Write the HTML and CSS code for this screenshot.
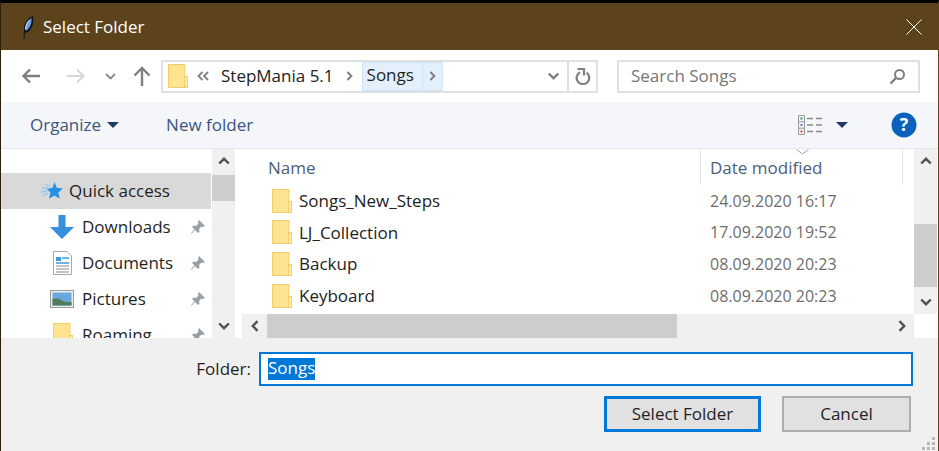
FILE: index.html
```html
<!DOCTYPE html>
<html lang="en">
<head>
  <meta charset="UTF-8">
  <title>Select Folder</title>
  <link rel="stylesheet" href="styles.css">
</head>
<body>
<svg class="defs" width="0" height="0">
  <symbol id="folder" viewBox="0 0 20 24">
    <rect x=".5" y=".5" width="16.500" height="23" fill="#fee491" stroke="#f2cf6b"/>
    <rect x="16.500" y="12.500" width="3" height="11" fill="#fde9a8" stroke="#f2cf6b"/>
  </symbol>
  <symbol id="pin" viewBox="0 0 16 16">
    <path d="M9 1l6 6-2 1-1.500-.5L9 10l.5 2.500L8 14 5 11l-3.500 4L1 14.500 4.500 10 2 8l1.500-1.500L6 7l2.500-2.500L8 3z" fill="#97a0a8"/>
  </symbol>
  <symbol id="chev-up" viewBox="0 0 12 8">
    <path d="M1.200 6.500L6 1.800l4.800 4.700" fill="none" stroke="currentColor" stroke-width="2.400"/>
  </symbol>
  <symbol id="chev-down" viewBox="0 0 12 8">
    <path d="M1.200 1.500L6 6.200l4.800-4.700" fill="none" stroke="currentColor" stroke-width="2.400"/>
  </symbol>
  <symbol id="chev-left" viewBox="0 0 8 12">
    <path d="M6.500 1.200L1.800 6l4.700 4.800" fill="none" stroke="currentColor" stroke-width="2.400"/>
  </symbol>
  <symbol id="chev-right" viewBox="0 0 8 12">
    <path d="M1.500 1.200L6.200 6l-4.700 4.800" fill="none" stroke="currentColor" stroke-width="2.400"/>
  </symbol>
</svg>

<div class="dialog">
  <header class="titlebar">
    <svg class="feather" width="13" height="24" viewBox="0 0 13 24">
      <path d="M2.500 24L3 16C2 11 5 4 12 1c1 6 0 12-5 16l-3 1-.5 6z" fill="#10141c"/>
      <path d="M4 15C4 10 6 6 10.500 3 11 8 9 13 5.500 15.500z" fill="#6a9fe0"/>
      <path d="M4.500 14C5 10 6.500 7 8.500 5" stroke="#cfe2f8" fill="none"/>
    </svg>
    <span class="titlebar-text">Select Folder</span>
    <svg class="close" width="16" height="16" viewBox="0 0 16 16">
      <path d="M.5.5l15 15M15.500.5l-15 15" stroke="#fff" fill="none"/>
    </svg>
  </header>

  <div class="addressrow">
    <svg class="nav-icon back" width="20" height="16" viewBox="0 0 20 16">
      <path d="M19 8H2.500M9 1.500L2.500 8 9 14.500" fill="none" stroke="#7f7f7f" stroke-width="2.400"/>
    </svg>
    <svg class="nav-icon forward" width="20" height="16" viewBox="0 0 20 16">
      <path d="M1 8h16.500M11 1.500L17.500 8 11 14.500" fill="none" stroke="#d6d6d6" stroke-width="2"/>
    </svg>
    <svg class="nav-icon recent" width="11" height="7" viewBox="0 0 11 7">
      <path d="M1 1l4.500 4.500L10 1" fill="none" stroke="#8a8a8a" stroke-width="1.800"/>
    </svg>
    <svg class="nav-icon up" width="18" height="20" viewBox="0 0 18 20">
      <path d="M9 20V3M1.500 9.500L9 2l7.500 7.500" fill="none" stroke="#7f7f7f" stroke-width="2.400"/>
    </svg>
    <div class="addressbar">
      <svg class="address-folder" width="20" height="24"><use href="#folder"/></svg>
      <svg class="crumb-more" width="12" height="10" viewBox="0 0 12 10">
        <path d="M5.500 1L1.500 5l4 4M11 1L7 5l4 4" fill="none" stroke="#808080" stroke-width="1.800"/>
      </svg>
      <span class="crumb">StepMania 5.1</span>
      <svg class="crumb-arrow" width="7" height="10"><use href="#chev-right"/></svg>
      <span class="crumb-active">
        <span class="crumb-name">Songs</span>
        <span class="crumb-end"><svg class="crumb-end-arrow" width="7" height="10"><use href="#chev-right"/></svg></span>
      </span>
      <svg class="address-drop" width="13" height="8"><use href="#chev-down"/></svg>
      <span class="refresh">
        <svg width="16" height="18" viewBox="0 0 16 18">
          <path d="M5 5.200a6.300 6.300 0 1 0 6.500.4" fill="none" stroke="#808080" stroke-width="2.200"/>
          <path d="M2.500 2h6.500v6.500" fill="none" stroke="#808080" stroke-width="2.200"/>
        </svg>
      </span>
    </div>
    <div class="searchbox">
      <span class="search-text">Search Songs</span>
      <svg width="17" height="17" viewBox="0 0 17 17">
        <circle cx="10.500" cy="6.500" r="4.500" fill="none" stroke="#7f7f7f" stroke-width="2"/>
        <path d="M7 10l-5.500 5.500" stroke="#7f7f7f" stroke-width="2.400" fill="none"/>
      </svg>
    </div>
  </div>

  <div class="toolbar">
    <span class="tool organize">Organize</span>
    <span class="caret"></span>
    <span class="tool newfolder">New folder</span>
    <svg class="viewicon" width="25" height="20" viewBox="0 0 25 20">
      <path d="M.5.500h6v19h-6zM.5 6.800h6M.5 13.200h6" fill="#f3f3f3" stroke="#9a9a9a"/>
      <rect x="2.500" y="2.500" width="2" height="2" fill="#3b9a5a"/>
      <rect x="2.500" y="9" width="2" height="2" fill="#4a86d8"/>
      <rect x="2.500" y="15.500" width="2" height="2" fill="#d84a3a"/>
      <path d="M9 3.500h6M18 3.500h6M9 10h6M18 10h6M9 16.500h6M18 16.500h6" stroke="#8a8a8a" stroke-width="1.500" fill="none"/>
    </svg>
    <span class="caret caret-view"></span>
    <svg class="help" width="26" height="26" viewBox="0 0 26 26">
      <circle cx="13" cy="13" r="12.500" fill="#0b62bd"/>
      <text x="13" y="19" text-anchor="middle" class="help-mark">?</text>
    </svg>
  </div>

  <div class="panes">
    <nav class="navpane">
      <div class="navlist">
        <div class="navrow navrow-quick">
          <svg width="22" height="20" viewBox="0 0 22 20">
            <path d="M13.500 1l2.300 5.800 6.200.6-4.700 4.200 1.400 6.200-5.200-3.200-5.500 3.200 1.400-6.200-3.600-3.600 5.700-1.200z" fill="#2a8fe6"/>
            <path d="M4 3l5 3M1 7h6M0 11l6-1M2 15l5-3" stroke="#8cc8f2" stroke-width="1.300" fill="none"/>
          </svg>
          <span>Quick access</span>
        </div>
        <div class="navrow">
          <svg class="navicon" width="24" height="24" viewBox="0 0 24 24">
            <path d="M8.500 0h7v12H24L12 24 0 12h8.500z" fill="#3a8ee0"/>
          </svg>
          <span class="navlabel">Downloads</span>
          <svg class="pin" width="16" height="16"><use href="#pin"/></svg>
        </div>
        <div class="navrow">
          <svg class="navicon" width="24" height="24" viewBox="0 0 24 24">
            <path d="M3.500.5H17L21.500 5v18.500h-18z" fill="#fdfdfd" stroke="#a8a8a8"/>
            <path d="M6 6h5v4H6z" fill="#3c9ad8"/>
            <path d="M12 7h7M6 12h13" stroke="#3c9ad8" stroke-width="1.500"/>
            <path d="M6 15h13M6 18h13M6 21h13" stroke="#8a8a8a"/>
          </svg>
          <span class="navlabel">Documents</span>
          <svg class="pin" width="16" height="16"><use href="#pin"/></svg>
        </div>
        <div class="navrow">
          <svg class="navicon" width="24" height="18" viewBox="0 0 24 18">
            <rect x=".5" y=".5" width="23" height="17" fill="#eee" stroke="#9a9a9a"/>
            <rect x="2.500" y="2.500" width="19" height="13" fill="#6aa8dc"/>
            <path d="M2.500 9c5-1 8 0 10 2 3 1 6 1 9 1v3.500h-19z" fill="#4d7d5c"/>
          </svg>
          <span class="navlabel">Pictures</span>
          <svg class="pin" width="16" height="16"><use href="#pin"/></svg>
        </div>
        <div class="navrow">
          <svg class="navicon-folder" width="20" height="24"><use href="#folder"/></svg>
          <span class="navlabel">Roaming</span>
          <svg class="pin" width="16" height="16"><use href="#pin"/></svg>
        </div>
      </div>
      <div class="vscroll vscroll-nav">
        <span class="arrow"><svg width="12" height="8"><use href="#chev-up"/></svg></span>
        <div class="track"><div class="thumb thumb-nav"></div></div>
        <span class="arrow"><svg width="12" height="8"><use href="#chev-down"/></svg></span>
      </div>
    </nav>

    <section class="files">
      <div class="files-top">
        <div class="filelist">
          <div class="fileheader">
            <span class="col-name">Name</span>
            <span class="col-date">
              <svg class="sortmark" width="13" height="6" viewBox="0 0 13 6">
                <path d="M.5.500l6 4.500 6-4.500" fill="none" stroke="#a0a0a0"/>
              </svg>
              Date modified
            </span>
          </div>
          <div class="filerow">
            <svg width="20" height="24"><use href="#folder"/></svg>
            <span class="filename">Songs_New_Steps</span>
            <span class="filedate">24.09.2020 16:17</span>
          </div>
          <div class="filerow">
            <svg width="20" height="24"><use href="#folder"/></svg>
            <span class="filename">LJ_Collection</span>
            <span class="filedate">17.09.2020 19:52</span>
          </div>
          <div class="filerow">
            <svg width="20" height="24"><use href="#folder"/></svg>
            <span class="filename">Backup</span>
            <span class="filedate">08.09.2020 20:23</span>
          </div>
          <div class="filerow">
            <svg width="20" height="24"><use href="#folder"/></svg>
            <span class="filename">Keyboard</span>
            <span class="filedate">08.09.2020 20:23</span>
          </div>
        </div>
        <div class="vscroll vscroll-files">
          <span class="arrow"><svg width="12" height="8"><use href="#chev-up"/></svg></span>
          <div class="track"><div class="thumb thumb-files"></div></div>
          <span class="arrow"><svg width="12" height="8"><use href="#chev-down"/></svg></span>
        </div>
      </div>
      <div class="hscroll">
        <span class="harrow"><svg width="8" height="12"><use href="#chev-left"/></svg></span>
        <div class="htrack"><div class="hthumb"></div></div>
        <span class="harrow"><svg width="8" height="12"><use href="#chev-right"/></svg></span>
        <span class="corner"></span>
      </div>
    </section>
  </div>

  <footer class="footer">
    <div class="folderline">
      <span class="folderlabel">Folder:</span>
      <div class="folderinput"><span class="selected">Songs</span></div>
    </div>
    <div class="buttons">
      <span class="btn btn-default">Select Folder</span>
      <span class="btn btn-cancel">Cancel</span>
    </div>
    <svg class="grip" width="15" height="15" viewBox="0 0 15 15">
      <path d="M11 1h3v3h-3zM6 6h3v3H6zM11 6h3v3h-3zM1 11h3v3H1zM6 11h3v3H6zM11 11h3v3h-3z" fill="#b8b8b8"/>
    </svg>
  </footer>
</div>
</body>
</html>
```

FILE: styles.css
```css
* {
  box-sizing: border-box;
}
html, body {
  margin: 0;
  height: 100%;
  overflow: hidden;
}
body {
  font-family: "Open Sans", "Noto Sans", sans-serif;
  font-size: 17px;
  color: #1f1f1f;
  background: #000;
}
.defs {
  display: block;
  height: 0;
}
svg {
  display: block;
  flex: none;
  color: #505050;
}
.dialog {
  width: 939px;
  height: 451px;
  display: flex;
  flex-direction: column;
  border-top: 3px solid #000;
  border-left: 1px solid #2c2008;
  border-right: 1px solid #5c431b;
  background: #fff;
}

/* title bar */
.titlebar {
  height: 47px;
  flex: none;
  display: flex;
  align-items: center;
  padding: 0 16px 0 20px;
  background: #5c431b;
  color: #fff;
}
.feather {
  margin-right: 9px;
}
.titlebar-text {
  flex: 1;
}

/* back / forward row */
.addressrow {
  height: 52px;
  flex: none;
  display: flex;
  align-items: center;
  padding-left: 20px;
  background: #fff;
}
.forward {
  margin-left: 25px;
}
.recent {
  margin-left: 19px;
}
.up {
  margin-left: 17px;
}
.addressbar {
  width: 437px;
  height: 33px;
  margin-left: 10px;
  display: flex;
  align-items: center;
  padding-left: 5px;
  border: 2px solid #e0e0e0;
}
.crumb-more {
  margin-left: 9px;
  margin-right: 12px;
}
.crumb {
  padding-bottom: 2px;
  color: #222;
}
.crumb-arrow {
  margin-left: 12px;
  color: #808080;
}
.crumb-active {
  margin-left: 9px;
  height: 29px;
  display: flex;
  background: #e3f0fb;
  border: 1px solid #cfe6f9;
}
.crumb-name {
  width: 60px;
  padding-left: 4px;
  line-height: 24px;
  border-right: 1px solid #cfe6f9;
}
.crumb-end {
  width: 19px;
  display: flex;
  align-items: center;
  justify-content: center;
}
.crumb-end-arrow {
  color: #808080;
}
.address-drop {
  margin-left: auto;
  margin-right: 7px;
  color: #808080;
}
.refresh {
  width: 29px;
  height: 29px;
  display: flex;
  align-items: center;
  justify-content: center;
  border-left: 2px solid #e0e0e0;
}
.searchbox {
  width: 303px;
  height: 33px;
  margin-left: 19px;
  display: flex;
  align-items: center;
  justify-content: space-between;
  padding: 0 12px 0 12px;
  border: 2px solid #e0e0e0;
  color: #767676;
}
.search-text {
  padding-bottom: 2px;
}

/* organize toolbar */
.toolbar {
  height: 47px;
  flex: none;
  display: flex;
  align-items: center;
  padding-left: 29px;
  background: #f4f6f9;
  border-bottom: 1px solid #e6e8ea;
}
.tool {
  padding-bottom: 2px;
  color: #3b5680;
}
.caret {
  width: 0;
  height: 0;
  margin-left: 6px;
  border-left: 6px solid transparent;
  border-right: 6px solid transparent;
  border-top: 6px solid #1f3a63;
}
.newfolder {
  margin-left: 47px;
}
.viewicon {
  margin-left: auto;
}
.caret-view {
  margin-left: 13px;
}
.help {
  margin-left: 43px;
  margin-right: 21px;
}
.help-mark {
  font-family: "Open Sans", sans-serif;
  font-size: 18px;
  font-weight: 700;
  fill: #fff;
}

/* navigation and file panes */
.panes {
  height: 189px;
  flex: none;
  display: flex;
  overflow: hidden;
}
.navpane {
  width: 239px;
  flex: none;
  display: flex;
  padding-right: 5px;
}
.navlist {
  width: 210px;
  flex: none;
  margin-right: 1px;
  padding-top: 24px;
  overflow: hidden;
}
.navrow {
  height: 36px;
  display: flex;
  align-items: center;
  padding-left: 49px;
}
.navrow span {
  padding-bottom: 2px;
}
.navrow-quick {
  background: #d9d9d9;
  padding-left: 40px;
}
.navrow-quick span {
  margin-left: 6px;
}
.navicon {
  margin-right: 8px;
}
.navicon-folder {
  margin-left: 3px;
  margin-right: 9px;
}
.navlabel {
  flex: 1;
  white-space: nowrap;
}
.pin {
  margin-right: 5px;
}
.vscroll {
  width: 23px;
  flex: none;
  display: flex;
  flex-direction: column;
  background: #f0f0f0;
}
.arrow {
  height: 24px;
  flex: none;
  display: flex;
  align-items: center;
  justify-content: center;
}
.track {
  flex: 1;
  display: flex;
  flex-direction: column;
}
.thumb {
  background: #cdcdcd;
}
.thumb-nav {
  height: 26px;
  margin-top: 2px;
}
.thumb-files {
  height: 63px;
  margin-top: 51px;
}
.vscroll-files {
  margin-right: 1px;
}
.files {
  flex: 1;
  display: flex;
  flex-direction: column;
  min-width: 0;
}
.files-top {
  height: 165px;
  flex: none;
  display: flex;
}
.filelist {
  flex: 1;
  min-width: 0;
}
.fileheader {
  height: 36px;
  display: flex;
  align-items: center;
  color: #4c607a;
}
.col-name {
  width: 460px;
  padding-left: 28px;
}
.col-date {
  position: relative;
  width: 203px;
  height: 36px;
  line-height: 38px;
  padding-left: 9px;
  border-left: 1px solid #e5e5e5;
  border-right: 1px solid #e5e5e5;
}
.sortmark {
  position: absolute;
  left: 95px;
  top: 0;
}
.filerow {
  height: 31.6px;
  display: flex;
  align-items: center;
  padding-left: 32px;
}
.filename {
  width: 411px;
  margin-left: 7px;
  color: #222;
}
.filedate {
  font-size: 16px;
  color: #6d6d6d;
}
.hscroll {
  height: 24px;
  flex: none;
  display: flex;
  margin-left: 2px;
  background: #f0f0f0;
}
.harrow {
  width: 25px;
  flex: none;
  display: flex;
  align-items: center;
  justify-content: center;
}
.htrack {
  flex: 1;
}
.hthumb {
  width: 410px;
  height: 24px;
  background: #cdcdcd;
}
.corner {
  width: 24px;
  flex: none;
  background: #fff;
}

/* folder field and buttons */
.footer {
  position: relative;
  flex: 1;
  padding-top: 14px;
  background: #f0f0f0;
}
.folderline {
  display: flex;
  align-items: center;
}
.folderlabel {
  width: 250px;
  padding-bottom: 2px;
  text-align: right;
}
.folderinput {
  width: 654px;
  height: 34px;
  margin-left: 8px;
  padding-left: 7px;
  display: flex;
  align-items: center;
  background: #fff;
  border: 2px solid #0078d7;
}
.selected {
  height: 22px;
  line-height: 20px;
  background: #0078d7;
  color: #fff;
}
.buttons {
  display: flex;
  margin-top: 10px;
  padding-left: 603px;
}
.btn {
  height: 36px;
  padding-bottom: 2px;
  display: flex;
  align-items: center;
  justify-content: center;
  background: #e1e1e1;
}
.btn-default {
  width: 157px;
  border: 3px solid #0078d7;
}
.btn-cancel {
  width: 129px;
  margin-left: 21px;
  border: 2px solid #adadad;
}
.grip {
  position: absolute;
  right: 2px;
  bottom: 0;
}
```
